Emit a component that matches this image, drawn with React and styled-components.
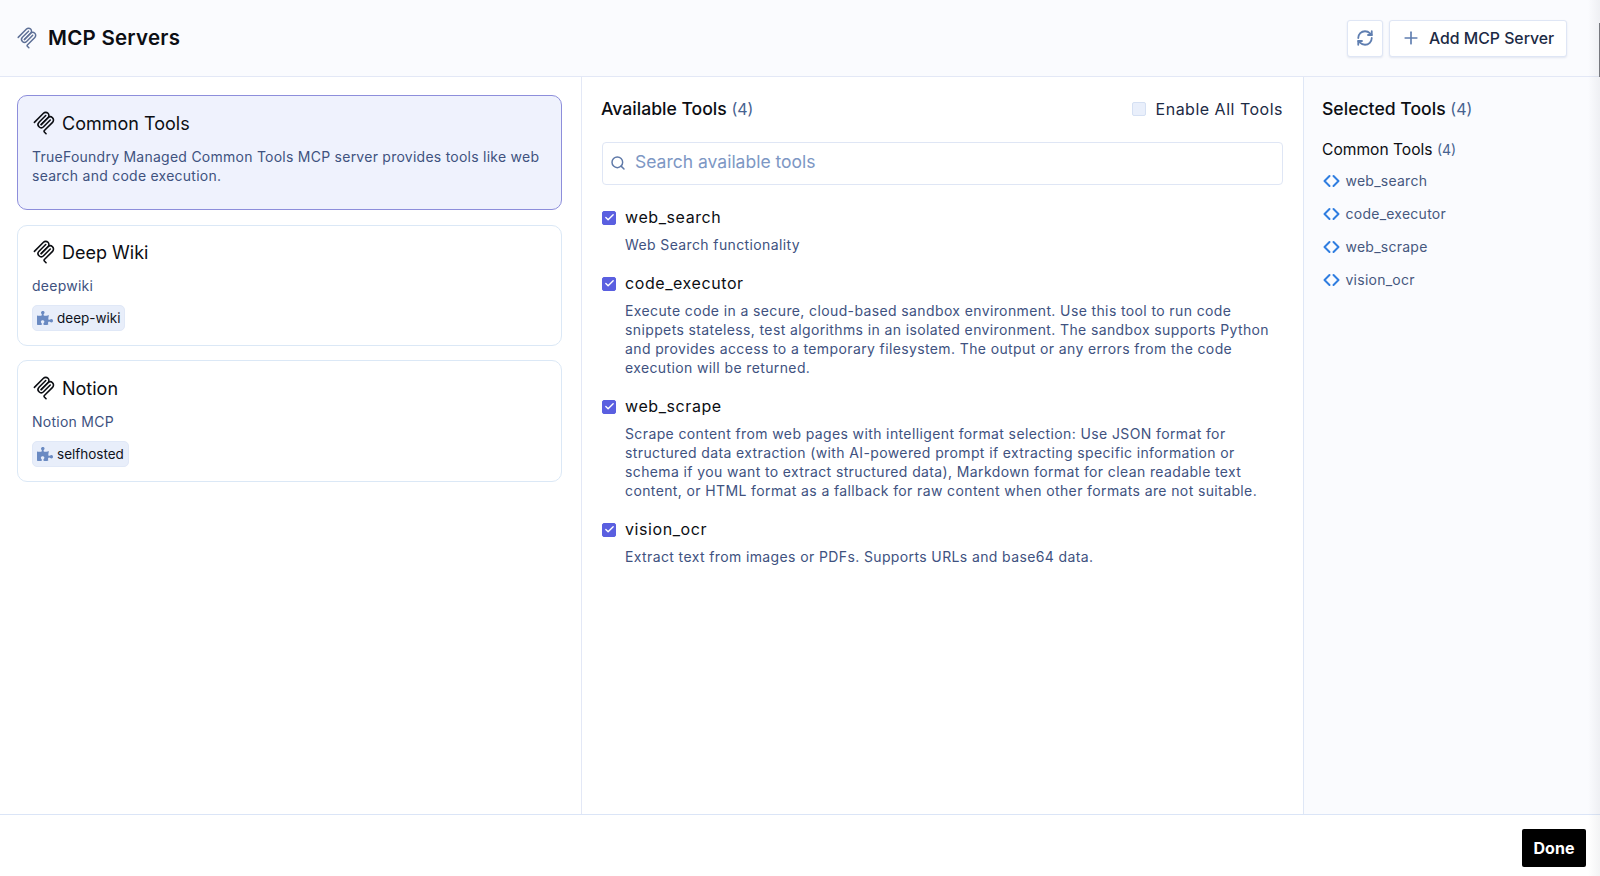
import React from "react";
import styled, { createGlobalStyle } from "styled-components";
import { FaPuzzlePiece } from "react-icons/fa";
import { Search, Plus, RefreshCw, ChevronLeft, ChevronRight, Check } from "lucide-react";

const Global = createGlobalStyle`
  html, body { margin: 0; padding: 0; height: 100%; background: #fff; overflow: hidden; }
  * { box-sizing: border-box; }
  body { font-family: Inter, "Noto Sans", sans-serif; color: #0b0d12; }
`;
const Page = styled.div`display:flex;flex-direction:column;width:1600px;height:876px;position:relative;`;
const EdgeShade = styled.div`position:absolute;top:0;right:0;bottom:0;width:12px;background:linear-gradient(90deg,rgba(120,125,135,0),rgba(120,125,135,.09));pointer-events:none;`;
const EdgeLine = styled.div`position:absolute;top:23px;right:0;width:1.5px;height:54px;background:#77797f;`;
const Header = styled.header`height:77px;flex:none;display:flex;align-items:center;justify-content:space-between;padding:0 33px 0 16px;background:#fafbfe;border-bottom:1px solid #e3e8f6;`;
const TitleWrap = styled.div`display:flex;align-items:center;gap:10px;`;
const Title = styled.h1`margin:0;font-size:20.5px;font-weight:600;letter-spacing:.25px;line-height:24px;color:#0c0e13;`;
const HeaderActions = styled.div`display:flex;gap:6px;`;
const HeaderBtn = styled.button`height:37px;width:${p=>p.$icon?"36px":"178px"};padding:0 ${p=>p.$icon?"0":"0 0 11px"};display:flex;align-items:center;justify-content:${p=>p.$icon?"center":"flex-start"};gap:8px;background:#fff;border:1px solid #dfe6f5;border-radius:3px;box-shadow:0 1px 2px rgba(60,80,140,.12);font:500 15.8px Inter,sans-serif;color:#1c2a44;`;
const Body = styled.main`flex:1;display:flex;min-height:0;`;
const Left = styled.section`width:582px;flex:none;padding:18px 19px 0 17px;border-right:1px solid #e3e8f6;display:flex;flex-direction:column;gap:14px;`;
const Card = styled.article`height:${p=>p.$h}px;margin-bottom:${p=>p.$mb||0}px;padding:${p=>p.$pt||12}px 14px 0;border-radius:10px;border:1px solid ${p=>p.$active?"#8d8edb":"#dbe8f6"};background:${p=>p.$active?"#eff2fd":"#fff"};`;
const CardHead = styled.div`display:flex;align-items:center;gap:6px;height:30px;`;
const CardTitle = styled.h2`margin:0;font-size:18px;font-weight:400;color:#0c0e13;`;
const CardDesc = styled.p`margin:9px 0 0;font-size:14px;line-height:19px;color:#40527f;letter-spacing:.25px;`;
const Tag = styled.span`display:inline-flex;align-items:center;gap:4px;height:26px;margin-top:10px;padding:0 4px;border-radius:5px;background:#e8eefa;border:1px solid #e0e8f7;font-size:13.5px;color:#10131c;svg{color:#6a8ac2;}`;
const Middle = styled.section`width:722px;flex:none;padding:18px 20px 0 20px;border-right:1px solid #dfe7f6;`;
const Row = styled.div`display:flex;align-items:center;justify-content:space-between;height:27px;`;
const Heading = styled.h3`margin:0 0 0 ${p=>p.$inset||0}px;font-size:17.6px;font-weight:500;color:#0c0e13;`;
const Count = styled.span`font-weight:400;color:#46628f;font-size:${p=>p.$s||16}px;`;
const EnableAll = styled.label`display:flex;align-items:center;gap:10px;font-size:16px;color:#1c2a44;letter-spacing:.5px;`;
const Box = styled.span`width:14px;height:14px;border-radius:2px;display:flex;align-items:center;justify-content:center;flex:none;background:${p=>p.$on?"#5a5fe0":"#e9effb"};border:1px solid ${p=>p.$on?"#5a5fe0":"#d5e0f3"};color:#fff;`;
const SearchBox = styled.div`height:43px;margin-top:20px;display:flex;align-items:center;gap:9px;padding:0 7px 4px;border:1px solid #dfe6f5;border-radius:4px;color:#7d97c4;font-size:17.5px;svg{color:#5f79a8;margin-top:2px;}`;
const ToolList = styled.div`margin-top:20px;display:flex;flex-direction:column;gap:17px;`;
const Tool = styled.div`display:grid;grid-template-columns:14px 1fr;column-gap:9px;align-items:center;> span{margin-top:1px;}`;
const ToolName = styled.div`font-size:16px;line-height:24px;color:#0c0e13;letter-spacing:.58px;`;
const ToolDesc = styled.p`grid-column:2;margin:6px 0 0;font-size:14px;line-height:19px;color:#40527f;letter-spacing:.38px;`;
const DescLine = styled.span`display:block;white-space:nowrap;`;
const Right = styled.aside`flex:1;padding:18px 0 0 18px;background:#fafbfe;`;
const SubHeading = styled.h4`margin:16px 0 0;font-size:15.6px;font-weight:400;color:#0c0e13;line-height:24px;`;
const Selected = styled.div`margin-top:6px;display:flex;flex-direction:column;gap:8px;`;
const SelectedItem = styled.div`display:flex;align-items:center;height:25px;font-size:14px;color:#46587e;letter-spacing:.25px;`;
const Chevrons = styled.span`display:flex;color:#2f7de0;svg:first-child{margin:0 -11px 0 -5.5px;}`;
const Footer = styled.footer`height:62px;flex:none;display:flex;align-items:center;justify-content:flex-end;padding:4px 14px 0 0;background:#fff;border-top:1px solid #dbe5f7;`;
const Done = styled.button`width:64px;height:38px;background:#000;border:none;border-radius:2px;color:#fff;font:700 16px Inter,sans-serif;`;

const Logo = ({size=24,color="#0c0e13"}) => (
  <svg width={size} height={size} viewBox="0 0 180 180" fill="none" stroke={color} strokeWidth="12" strokeLinecap="round">
    <path d="M18 84.8528L85.8822 16.9706C95.2548 7.59798 110.451 7.59798 119.823 16.9706C129.196 26.3431 129.196 41.5391 119.823 50.9117L68.5581 102.177"/>
    <path d="M69.2652 101.47L119.823 50.9117C129.196 41.5391 144.392 41.5391 153.765 50.9117L154.118 51.2652C163.491 60.6378 163.491 75.8338 154.118 85.2063L92.7248 146.6C89.6006 149.724 89.6006 154.789 92.7248 157.913L105.331 170.52"/>
    <path d="M102.853 33.9411L52.6482 84.1457C43.2756 93.5183 43.2756 108.714 52.6482 118.087C62.0208 127.459 77.2167 127.459 86.5893 118.087L136.794 67.8822"/>
  </svg>
);

const tools = [
  ["web_search",["Web Search functionality"]],
  ["code_executor",["Execute code in a secure, cloud-based sandbox environment. Use this tool to run code","snippets stateless, test algorithms in an isolated environment. The sandbox supports Python","and provides access to a temporary filesystem. The output or any errors from the code","execution will be returned."]],
  ["web_scrape",["Scrape content from web pages with intelligent format selection: Use JSON format for","structured data extraction (with AI-powered prompt if extracting specific information or","schema if you want to extract structured data), Markdown format for clean readable text","content, or HTML format as a fallback for raw content when other formats are not suitable."]],
  ["vision_ocr",["Extract text from images or PDFs. Supports URLs and base64 data."]],
];

export default function App(){
  return (<Page><Global/>
    <Header>
      <TitleWrap><Logo size={22} color="#5d6f96"/><Title>MCP Servers</Title></TitleWrap>
      <HeaderActions>
        <HeaderBtn $icon><RefreshCw size={18} strokeWidth={2.4} color="#5f7eb0"/></HeaderBtn>
        <HeaderBtn><Plus size={20} color="#5f7eb0"/>Add MCP Server</HeaderBtn>
      </HeaderActions>
    </Header>
    <Body>
      <Left>
        <Card $active $h={115} $mb={1}>
          <CardHead><Logo size={24}/><CardTitle>Common Tools</CardTitle></CardHead>
          <CardDesc>TrueFoundry Managed Common Tools MCP server provides tools like web search and code execution.</CardDesc>
        </Card>
        <Card $h={121} $pt={11}>
          <CardHead><Logo size={24}/><CardTitle>Deep Wiki</CardTitle></CardHead>
          <CardDesc>deepwiki</CardDesc>
          <Tag><FaPuzzlePiece size={16}/>deep-wiki</Tag>
        </Card>
        <Card $h={122}>
          <CardHead><Logo size={24}/><CardTitle>Notion</CardTitle></CardHead>
          <CardDesc>Notion MCP</CardDesc>
          <Tag><FaPuzzlePiece size={16}/>selfhosted</Tag>
        </Card>
      </Left>
      <Middle>
        <Row>
          <Heading $inset={-1}>Available Tools <Count>(4)</Count></Heading>
          <EnableAll><Box/>Enable All Tools</EnableAll>
        </Row>
        <SearchBox><Search size={16} strokeWidth={2.2}/>Search available tools</SearchBox>
        <ToolList>
          {tools.map(([n,lines])=>(
            <Tool key={n}>
              <Box $on><Check size={11} strokeWidth={3}/></Box>
              <ToolName>{n}</ToolName>
              <ToolDesc>{lines.map(l=><DescLine key={l}>{l}</DescLine>)}</ToolDesc>
            </Tool>
          ))}
        </ToolList>
      </Middle>
      <Right>
        <Row><Heading>Selected Tools <Count>(4)</Count></Heading></Row>
        <SubHeading>Common Tools <Count $s={14}>(4)</Count></SubHeading>
        <Selected>
          {tools.map(([n])=>(
            <SelectedItem key={n}><Chevrons><ChevronLeft size={20} strokeWidth={2.4}/><ChevronRight size={20} strokeWidth={2.4}/></Chevrons>{n}</SelectedItem>
          ))}
        </Selected>
      </Right>
    </Body>
    <Footer><Done>Done</Done></Footer>
    <EdgeShade/>
    <EdgeLine/>
  </Page>);
}
